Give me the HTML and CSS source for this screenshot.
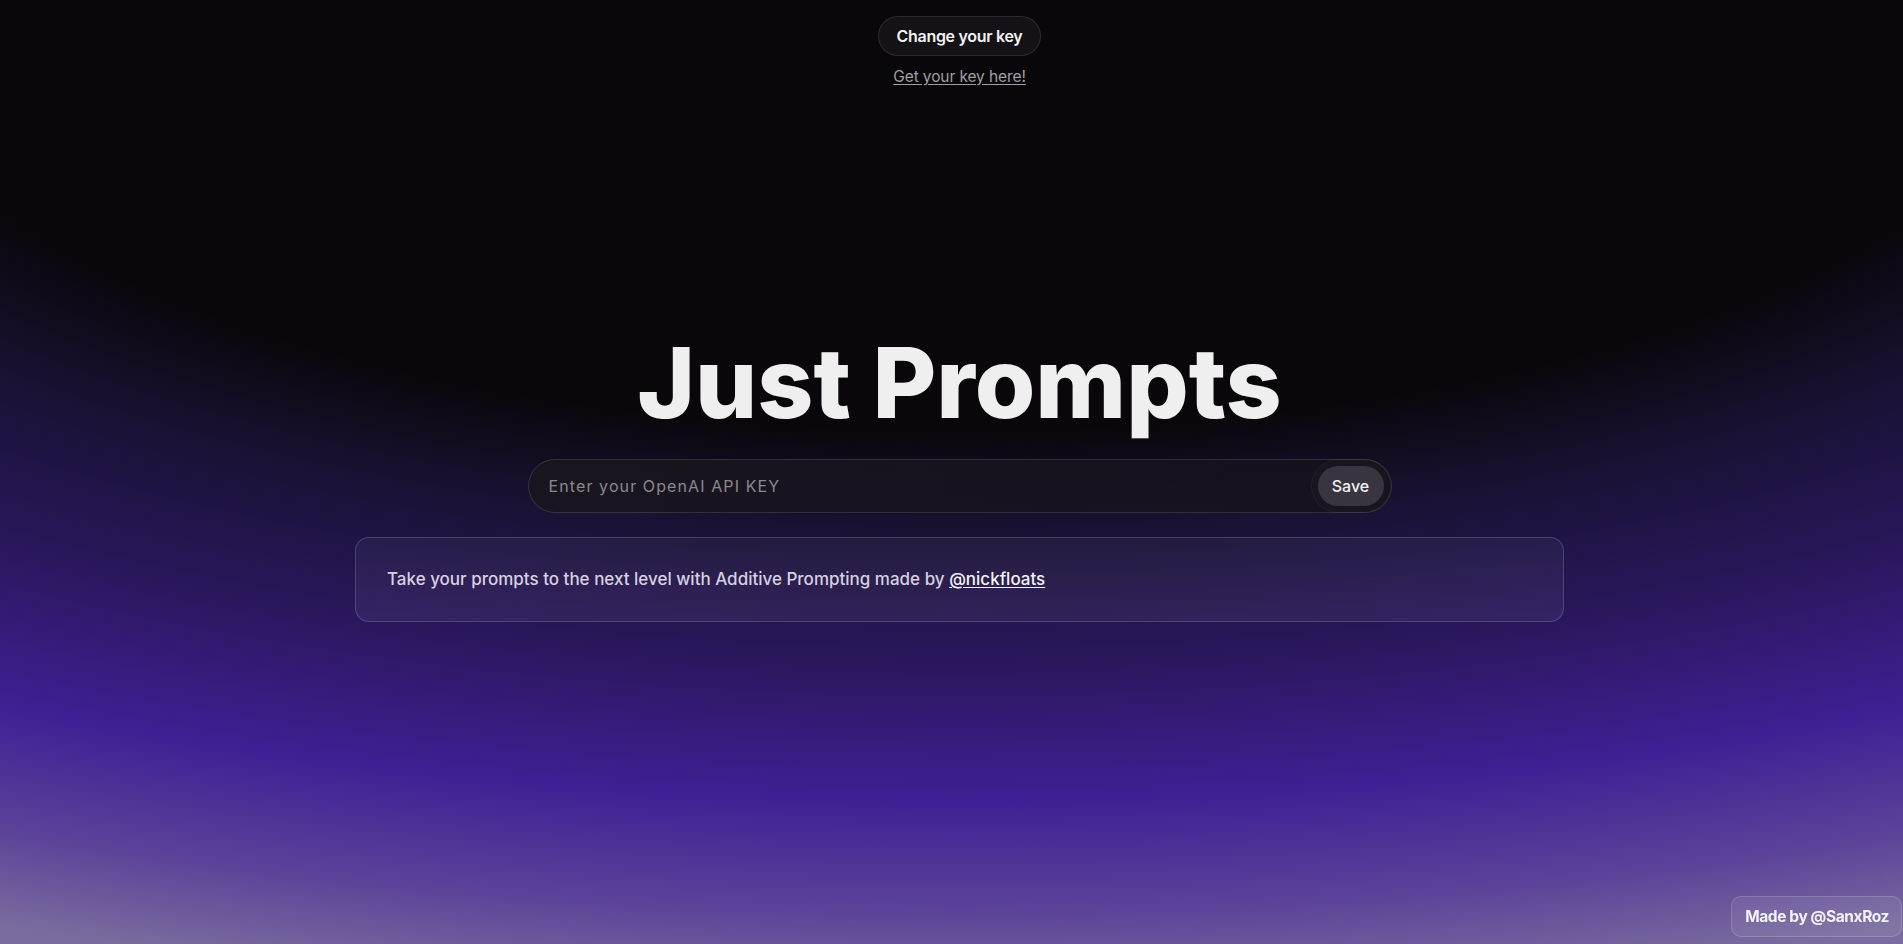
FILE: index.html
```html
<!DOCTYPE html>
<html lang="en">
<head>
<meta charset="utf-8">
<title>Just Prompts</title>
<link rel="stylesheet" href="styles.css">
</head>
<body>
<main class="page">
  <button class="change-key" type="button">Change your key</button>
  <a class="get-key" href="#">Get your key here!</a>
  <h1 class="title">Just Prompts</h1>
  <form class="key-form">
    <input class="key-input" type="text" placeholder="Enter your OpenAI API KEY">
    <button class="save-btn" type="button">Save</button>
  </form>
  <div class="info-card">
    <p class="info-text">Take your prompts to the next level with Additive Prompting made by <a class="info-link" href="#">@nickfloats</a></p>
  </div>
</main>
<a class="made-by" href="#">Made by @SanxRoz</a>
</body>
</html>
```

FILE: styles.css
```css
html, body {
  margin: 0;
  padding: 0;
  height: 100%;
}

body {
  min-height: 944px;
  overflow: hidden;
  font-family: Inter, "Noto Sans", sans-serif;
  color: #f0f0f0;
  background-color: #0a070b;
  background-image: radial-gradient(ellipse 2540px 1000px at 959px 0px,
    #0a070b 0%,
    #0a070b 43%,
    #1a1133 53%,
    #29175c 66%,
    #3f2094 80%,
    #5a4399 91%,
    #7a6c9e 100%,
    #7e709f 110%);
}

.page {
  display: flex;
  flex-direction: column;
  align-items: center;
  padding: 16px 0 0 16px;
}

.change-key {
  height: 40px;
  padding: 0 18px;
  border-radius: 999px;
  border: 1px solid rgba(255, 255, 255, 0.1);
  background: #141217;
  color: #f2f2f2;
  font-family: Inter, "Noto Sans", sans-serif;
  font-size: 16px;
  font-weight: 600;
  letter-spacing: -0.3px;
  cursor: pointer;
}

.get-key {
  margin-top: 9px;
  line-height: 24px;
  font-size: 15.5px;
  letter-spacing: -0.1px;
  color: #a19ea6;
  text-decoration: underline;
  text-underline-offset: 2px;
}

.title {
  margin: 244px 0 0;
  font-family: Inter, sans-serif;
  font-weight: 800;
  font-size: 98px;
  line-height: 100px;
  color: #efefef;
  letter-spacing: 0;
}

.key-form {
  margin: 26px 0 0;
  width: 864px;
  height: 54px;
  box-sizing: border-box;
  display: flex;
  align-items: center;
  padding: 6px 7px 6px 18px;
  border-radius: 999px;
  border: 1px solid rgba(255, 255, 255, 0.12);
  background: linear-gradient(100deg, rgba(26, 22, 30, 0.9), rgba(22, 18, 28, 0.85));
}

.key-input {
  flex: 1;
  min-width: 0;
  border: 0;
  outline: none;
  background: transparent;
  color: #e0e0e0;
  font-family: Inter, "Noto Sans", sans-serif;
  font-size: 16px;
  letter-spacing: 1.1px;
}

.key-input::placeholder {
  color: #8b8790;
}

.save-btn {
  width: 66px;
  height: 40px;
  border: 0;
  border-radius: 999px;
  background: #3a3440;
  color: #f2f2f2;
  font-family: Inter, "Noto Sans", sans-serif;
  font-size: 16px;
  font-weight: 500;
  box-shadow: 0 0 0 6px rgba(24, 20, 28, 0.9), 0 0 0 7px rgba(255, 255, 255, 0.05);
  cursor: pointer;
}

.info-card {
  margin-top: 24px;
  width: 1209px;
  box-sizing: border-box;
  padding: 30px 31px;
  border-radius: 14px;
  border: 1px solid rgba(255, 255, 255, 0.16);
  background: linear-gradient(180deg, rgba(255, 255, 255, 0.04), rgba(255, 255, 255, 0.06));
}

.info-text {
  margin: 0;
  font-size: 17px;
  line-height: 23px;
  font-weight: 500;
  color: #d7d0e2;
}

.info-link {
  color: #f4f2f7;
  text-decoration: underline;
  text-underline-offset: 2px;
}

.made-by {
  position: fixed;
  right: 1px;
  bottom: 7px;
  height: 41px;
  box-sizing: border-box;
  display: flex;
  align-items: center;
  padding: 0 12px 0 13px;
  border-radius: 10px;
  border: 1px solid rgba(255, 255, 255, 0.16);
  background: rgba(255, 255, 255, 0.07);
  color: #f4f2f8;
  font-size: 15.5px;
  font-weight: 700;
  letter-spacing: -0.4px;
  text-decoration: none;
}
```
